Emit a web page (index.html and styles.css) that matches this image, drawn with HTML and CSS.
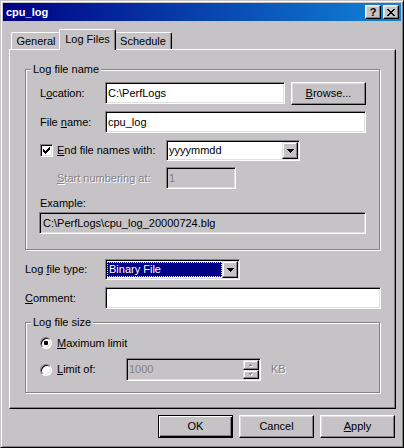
FILE: index.html
```html
<!DOCTYPE html>
<html>
<head>
<meta charset="utf-8">
<title>cpu_log</title>
<link rel="stylesheet" href="styles.css">
</head>
<body>
<div class="window">
  <div class="titlebar">
    <span class="title">cpu_log</span>
    <span class="cap-btn cap-help">?</span>
    <span class="cap-btn cap-close"><svg width="8" height="7" viewBox="0 0 8 7"><path d="M0 0h2v1h-2z M6 0h2v1h-2z M1 1h2v1h-2z M5 1h2v1h-2z M2 2h4v1h-4z M3 3h2v1h-2z M2 4h4v1h-4z M1 5h2v1h-2z M5 5h2v1h-2z M0 6h2v1h-2z M6 6h2v1h-2z" fill="#000"/></svg></span>
  </div>
  <div class="client">
    <div class="tabs">
      <div class="tab tab-general">General</div>
      <div class="tab tab-active">Log Files</div>
      <div class="tab tab-schedule">Schedule</div>
    </div>
    <div class="panel">
      <div class="group group-name">
        <div class="legend">Log file name</div>
        <div class="row row-location">
          <span class="lbl lbl-tall">L<u>o</u>cation:</span>
          <div class="edit edit-location">C:\PerfLogs</div>
          <div class="btn btn-browse"><span><u>B</u>rowse...</span></div>
        </div>
        <div class="row row-filename">
          <span class="lbl">File <u>n</u>ame:</span>
          <div class="edit edit-filename">cpu_log</div>
        </div>
        <div class="row row-end">
          <span class="chk-wrap">
            <span class="checkbox"><svg width="7" height="7" viewBox="0 0 7 7"><path d="M6 0h1v1h-1z M5 1h2v1h-2z M0 2h1v1h-1z M4 2h3v1h-3z M0 3h2v1h-2z M3 3h3v1h-3z M0 4h5v1h-5z M1 5h3v1h-3z M2 6h1v1h-1z" fill="#000"/></svg></span>
            <span><u>E</u>nd file names with:</span>
          </span>
          <div class="combo combo-end">
            <span class="combo-value">yyyymmdd</span>
            <span class="drop-btn"><svg width="7" height="4" viewBox="0 0 7 4"><path d="M0 0h7v1h-1v1h-1v1h-1v1h-1v-1h-1v-1h-1v-1h-1z" fill="#000"/></svg></span>
          </div>
        </div>
        <div class="row row-start">
          <span class="lbl-indent disabled"><u>S</u>tart numbering at:</span>
          <div class="edit edit-start disabled-edit">1</div>
        </div>
        <div class="example-label">Example:</div>
        <div class="edit example-box">C:\PerfLogs\cpu_log_20000724.blg</div>
      </div>

      <div class="row row-type">
        <span class="lbl lbl-wide">Log <u>f</u>ile type:</span>
        <div class="combo combo-type">
          <span class="combo-value selected">Binary File</span>
          <span class="drop-btn"><svg width="7" height="4" viewBox="0 0 7 4"><path d="M0 0h7v1h-1v1h-1v1h-1v1h-1v-1h-1v-1h-1v-1h-1z" fill="#000"/></svg></span>
        </div>
      </div>
      <div class="row row-comment">
        <span class="lbl lbl-wide"><u>C</u>omment:</span>
        <div class="edit edit-comment"></div>
      </div>

      <div class="group group-size">
        <div class="legend">Log file size</div>
        <div class="row row-radio1">
          <span class="radio"><span class="dot"></span></span>
          <span><u>M</u>aximum limit</span>
        </div>
        <div class="row row-radio2">
          <span class="radio-col">
            <span class="radio"></span>
            <span><u>L</u>imit of:</span>
          </span>
          <div class="edit spin disabled-edit">
            <span class="spin-value">1000</span>
            <span class="spin-btns">
              <span class="spin-btn up"><svg width="4" height="3" viewBox="0 0 4 3"><path d="M2 1h1v1h1v1h-3v-1h1z" fill="#fff"/><path d="M1 0h1v1h1v1h-3v-1h1z" fill="#848284"/></svg></span>
              <span class="spin-btn down"><svg width="4" height="3" viewBox="0 0 4 3"><path d="M1 1h3v1h-1v1h-1v-1h-1z" fill="#fff"/><path d="M0 0h3v1h-1v1h-1v-1h-1z" fill="#848284"/></svg></span>
            </span>
          </div>
          <span class="kb disabled">KB</span>
        </div>
      </div>
    </div>
    <div class="buttons">
      <div class="btn btn-default"><span>OK</span></div>
      <div class="btn"><span>Cancel</span></div>
      <div class="btn"><span><u>A</u>pply</span></div>
    </div>
  </div>
</div>
</body>
</html>
```

FILE: styles.css
```css
* { box-sizing: border-box; }
html, body { margin: 0; padding: 0; }
body {
  width: 404px;
  height: 448px;
  overflow: hidden;
  background: #c6c3c6;
  font-family: "Liberation Sans", Arial, sans-serif;
  font-size: 11px;
  line-height: 13px;
  color: #000;
}
u { text-decoration: underline; text-underline-offset: 1px; }

.window {
  width: 404px;
  height: 448px;
  padding: 2px;
  background: #c6c3c6;
  border: 1px solid;
  border-color: #c6c3c6 #000 #000 #c6c3c6;
  box-shadow: inset 1px 1px 0 #fff, inset -1px -1px 0 #848284;
}

/* title bar */
.titlebar {
  height: 18px;
  display: flex;
  align-items: center;
  padding-left: 3px;
  background: linear-gradient(to right, #000084, #1084d6);
}
.title {
  flex: 1;
  color: #fff;
  font-weight: bold;
  font-size: 11px;
}
.cap-btn {
  width: 16px;
  height: 14px;
  flex: none;
  display: flex;
  align-items: center;
  justify-content: center;
  background: #c6c3c6;
  border: 1px solid;
  border-color: #fff #000 #000 #fff;
  box-shadow: inset -1px -1px 0 #848284, inset 1px 1px 0 #dedfde;
  font-weight: bold;
  font-size: 11px;
  line-height: 12px;
}
.cap-help { margin-right: 2px; }
.cap-close { margin-right: 2px; }

/* client */
.client { padding: 8px 5px 0 6px; }

.tabs {
  display: flex;
  align-items: flex-end;
  height: 20px;
  padding-left: 2px;
}
.tab {
  height: 17px;
  flex: none;
  text-align: center;
  padding-top: 1px;
  line-height: 14px;
  border: 1px solid;
  border-bottom: 0;
  border-color: #fff #000 #000 #fff;
  border-radius: 2px 2px 0 0;
  box-shadow: inset -1px 0 0 #848284;
  background: #c6c3c6;
}
.tab-general { width: 50px; }
.tab-active {
  width: 57px;
  height: 21px;
  margin: 0 -2px -1px;
  padding-top: 2px;
  position: relative;
  z-index: 1;
}
.tab-schedule { width: 58px; }

.panel {
  height: 360px;
  padding: 19px 0 0 15px;
  border: 1px solid;
  border-color: #fff #000 #000 #fff;
  box-shadow: inset -1px -1px 0 #848284;
}

/* group boxes */
.group {
  width: 355px;
  border: 1px solid #848284;
  box-shadow: 1px 1px 0 #fff, inset 1px 1px 0 #fff;
  padding-left: 14px;
}
.group-name { height: 181px; }
.group-size { height: 71px; margin-top: 13px; }
.legend {
  width: fit-content;
  margin: -7px 0 0 -9px;
  padding: 0 2px;
  background: #c6c3c6;
  line-height: 13px;
}

/* rows */
.row { display: flex; align-items: center; }
.row-location { margin-top: 6px; align-items: flex-start; }
.row-filename { margin-top: 6px; }
.row-end { margin-top: 7px; }
.row-start { margin-top: 6px; }
.row-type { margin-top: 9px; }
.row-comment { margin-top: 7px; }
.row-radio1 { margin-top: 7px; height: 14px; }
.row-radio2 { margin-top: 8px; }

.lbl { width: 65px; flex: none; }
.lbl-tall { line-height: 23px; }
.lbl-wide { width: 80px; }
.lbl-indent { width: 126px; flex: none; padding-left: 17px; }

.disabled { color: #848284; text-shadow: 1px 1px 0 #fff; }

/* edits */
.edit {
  height: 22px;
  flex: none;
  background: #fff;
  border: 1px solid;
  border-color: #848284 #fff #fff #848284;
  box-shadow: inset 1px 1px 0 #000, inset -1px -1px 0 #dedfde;
  padding: 0 2px;
  line-height: 20px;
  white-space: nowrap;
  overflow: hidden;
}
.edit-location { width: 180px; }
.edit-filename { width: 261px; }
.edit-start { width: 70px; }
.edit-comment { width: 276px; }
.disabled-edit { background: #c6c3c6; color: #848284; }

.example-label { margin-top: 8px; padding-left: 0; }
.example-box {
  width: 327px;
  margin-top: 2px;
  margin-left: -1px;
  background: #c6c3c6;
  padding-left: 3px;
}

/* buttons */
.btn {
  width: 75px;
  height: 23px;
  flex: none;
  display: flex;
  align-items: center;
  justify-content: center;
  background: #c6c3c6;
  border: 1px solid;
  border-color: #fff #000 #000 #fff;
  box-shadow: inset -1px -1px 0 #848284, inset 1px 1px 0 #dedfde;
}
.btn-browse { margin-left: 6px; }
.btn-default {
  border-color: #000;
  box-shadow: inset 1px 1px 0 #fff, inset -1px -1px 0 #000, inset -2px -2px 0 #848284;
}

/* checkbox */
.chk-wrap { width: 126px; flex: none; display: flex; align-items: center; }
.checkbox {
  width: 13px;
  height: 13px;
  flex: none;
  margin-right: 4px;
  display: flex;
  align-items: center;
  justify-content: center;
  background: #fff;
  border: 1px solid;
  border-color: #848284 #fff #fff #848284;
  box-shadow: inset 1px 1px 0 #000, inset -1px -1px 0 #dedfde;
}

/* combo */
.combo {
  height: 21px;
  flex: none;
  display: flex;
  padding: 1px;
  background: #fff;
  border: 1px solid;
  border-color: #848284 #fff #fff #848284;
  box-shadow: inset 1px 1px 0 #000, inset -1px -1px 0 #dedfde;
}
.combo-end { width: 134px; }
.combo-type { width: 135px; }
.combo-value {
  flex: 1;
  padding-left: 1px;
  line-height: 17px;
  white-space: nowrap;
  overflow: hidden;
}
.combo-value.selected {
  margin: 1px 0 1px 0;
  line-height: 13px;
  background: #000084;
  color: #fff;
  border: 1px dotted #ffff00;
  padding-left: 1px;
}
.drop-btn {
  width: 16px;
  height: 17px;
  flex: none;
  display: flex;
  align-items: center;
  justify-content: center;
  background: #c6c3c6;
  border: 1px solid;
  border-color: #dedfde #000 #000 #dedfde;
  box-shadow: inset -1px -1px 0 #848284, inset 1px 1px 0 #fff;
}

/* radios */
.radio {
  width: 12px;
  height: 12px;
  flex: none;
  margin-right: 5px;
  border-radius: 50%;
  display: flex;
  align-items: center;
  justify-content: center;
  background: #fff;
  border: 1px solid;
  border-color: #848284 #fff #fff #848284;
  box-shadow: inset 1px 1px 0 #000, inset -1px -1px 0 #dedfde;
}
.dot { width: 4px; height: 4px; border-radius: 1px; background: #000; }
.radio-col { width: 86px; flex: none; display: flex; align-items: center; }

/* spin */
.spin {
  width: 135px;
  height: 23px;
  display: flex;
  padding: 1px;
}
.spin-value { flex: 1; padding-left: 1px; line-height: 19px; }
.spin-btns { width: 16px; display: flex; flex-direction: column; }
.spin-btn {
  flex: 1;
  display: flex;
  align-items: center;
  justify-content: center;
  background: #c6c3c6;
  border: 1px solid;
  border-color: #dedfde #000 #000 #dedfde;
  box-shadow: inset -1px -1px 0 #848284, inset 1px 1px 0 #fff;
}
.spin-btn.up { flex: 0 0 10px; }
.kb { margin-left: 10px; }

/* bottom buttons */
.buttons {
  margin-top: 6px;
  display: flex;
  justify-content: flex-end;
  gap: 6px;
  padding-right: 1px;
}
```
